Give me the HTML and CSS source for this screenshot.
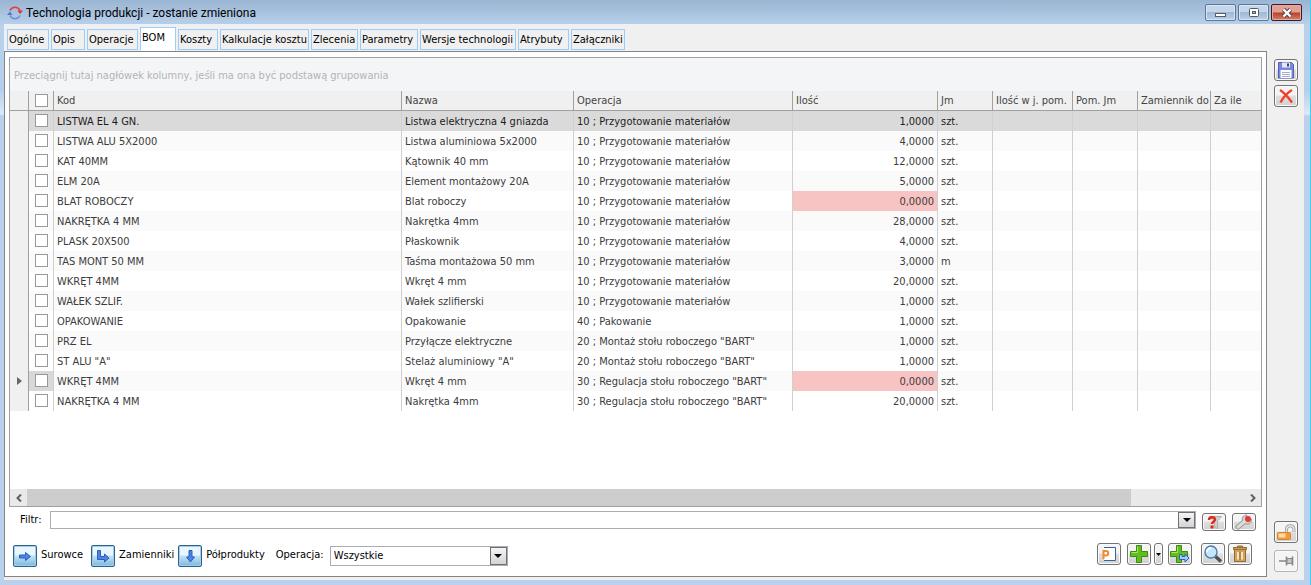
FILE: index.html
```html
<!DOCTYPE html>
<html lang="pl">
<head>
<meta charset="utf-8">
<title>Technologia produkcji - zostanie zmieniona</title>
<link rel="stylesheet" href="styles.css">
</head>
<body>
<div class="window">
  <header class="titlebar">
    <svg class="app-icon" viewBox="0 0 16 16" width="16" height="16"><path d="M3 5.500A5.500 5.500 0 0 1 13 5.500" fill="none" stroke="#e0403c" stroke-width="1.600"/><path d="M10.500 5.500h5.500L13 9z" fill="#d8302c"/><path d="M13 10.500A5.500 5.500 0 0 1 3 10.500" fill="none" stroke="#6b92e0" stroke-width="1.600"/><path d="M0 10h5.500L3 6.500z" fill="#4a78d4"/></svg>
    <h1>Technologia produkcji - zostanie zmieniona</h1>
    <div class="win-buttons">
      <button class="win" aria-label="Minimalizuj"><svg viewBox="0 0 12 10" width="12" height="10"><rect x=".5" y="5.500" width="10" height="3" fill="#fff" stroke="#555a66"/></svg></button>
      <button class="win" aria-label="Maksymalizuj"><svg viewBox="0 0 12 10" width="12" height="10"><rect x="1.500" y=".5" width="9" height="8" rx="1" fill="#fff" stroke="#555a66"/><rect x="4.500" y="3.500" width="3" height="2" fill="#9db5d0" stroke="#555a66"/></svg></button>
      <button class="win close" aria-label="Zamknij"><svg viewBox="0 0 12 10" width="12" height="10"><path d="M2.500 1.500l7 7m0-7l-7 7" stroke="#5a4448" stroke-width="4.400"/><path d="M2.500 1.500l7 7m0-7l-7 7" stroke="#fff" stroke-width="2.400"/></svg></button>
    </div>
  </header>
  <div class="client">
    <main class="main">
      <nav class="tabs">
        <button>Ogólne</button><button>Opis</button><button>Operacje</button><button class="active">BOM</button><button>Koszty</button><button>Kalkulacje kosztu</button><button>Zlecenia</button><button>Parametry</button><button>Wersje technologii</button><button>Atrybuty</button><button>Załączniki</button>
      </nav>
      <section class="panel">
        <div class="grid">
          <div class="group-hint">Przeciągnij tutaj nagłówek kolumny, jeśli ma ona być podstawą grupowania</div>
          <table>
            <colgroup><col class="c-mark"><col class="c-check"><col class="c-code"><col class="c-name"><col class="c-op"><col class="c-qty"><col class="c-unit"><col class="c-aux"><col class="c-auxunit"><col class="c-sub"><col></colgroup>
            <thead><tr><th></th><th><input type="checkbox" aria-label="Zaznacz wszystkie"></th><th>Kod</th><th>Nazwa</th><th>Operacja</th><th>Ilość</th><th>Jm</th><th>Ilość w j. pom.</th><th>Pom. Jm</th><th>Zamiennik do</th><th>Za ile</th></tr></thead>
            <tbody>
              <tr class="selected"><td></td><td><input type="checkbox" aria-label="LISTWA EL 4 GN."></td><td>LISTWA EL 4 GN.</td><td>Listwa elektryczna 4 gniazda</td><td>10 ; Przygotowanie materiałów</td><td>1,0000</td><td>szt.</td><td></td><td></td><td></td><td></td></tr>
              <tr><td></td><td><input type="checkbox" aria-label="LISTWA ALU 5X2000"></td><td>LISTWA ALU 5X2000</td><td>Listwa aluminiowa 5x2000</td><td>10 ; Przygotowanie materiałów</td><td>4,0000</td><td>szt.</td><td></td><td></td><td></td><td></td></tr>
              <tr><td></td><td><input type="checkbox" aria-label="KAT 40MM"></td><td>KAT 40MM</td><td>Kątownik 40 mm</td><td>10 ; Przygotowanie materiałów</td><td>12,0000</td><td>szt.</td><td></td><td></td><td></td><td></td></tr>
              <tr><td></td><td><input type="checkbox" aria-label="ELM 20A"></td><td>ELM 20A</td><td>Element montażowy 20A</td><td>10 ; Przygotowanie materiałów</td><td>5,0000</td><td>szt.</td><td></td><td></td><td></td><td></td></tr>
              <tr><td></td><td><input type="checkbox" aria-label="BLAT ROBOCZY"></td><td>BLAT ROBOCZY</td><td>Blat roboczy</td><td>10 ; Przygotowanie materiałów</td><td class="missing">0,0000</td><td>szt.</td><td></td><td></td><td></td><td></td></tr>
              <tr><td></td><td><input type="checkbox" aria-label="NAKRĘTKA 4 MM"></td><td>NAKRĘTKA 4 MM</td><td>Nakrętka 4mm</td><td>10 ; Przygotowanie materiałów</td><td>28,0000</td><td>szt.</td><td></td><td></td><td></td><td></td></tr>
              <tr><td></td><td><input type="checkbox" aria-label="PLASK 20X500"></td><td>PLASK 20X500</td><td>Płaskownik</td><td>10 ; Przygotowanie materiałów</td><td>4,0000</td><td>szt.</td><td></td><td></td><td></td><td></td></tr>
              <tr><td></td><td><input type="checkbox" aria-label="TAS MONT 50 MM"></td><td>TAS MONT 50 MM</td><td>Taśma montażowa 50 mm</td><td>10 ; Przygotowanie materiałów</td><td>3,0000</td><td>m</td><td></td><td></td><td></td><td></td></tr>
              <tr><td></td><td><input type="checkbox" aria-label="WKRĘT 4MM"></td><td>WKRĘT 4MM</td><td>Wkręt 4 mm</td><td>10 ; Przygotowanie materiałów</td><td>20,0000</td><td>szt.</td><td></td><td></td><td></td><td></td></tr>
              <tr><td></td><td><input type="checkbox" aria-label="WAŁEK SZLIF."></td><td>WAŁEK SZLIF.</td><td>Wałek szlifierski</td><td>10 ; Przygotowanie materiałów</td><td>1,0000</td><td>szt.</td><td></td><td></td><td></td><td></td></tr>
              <tr><td></td><td><input type="checkbox" aria-label="OPAKOWANIE"></td><td>OPAKOWANIE</td><td>Opakowanie</td><td>40 ; Pakowanie</td><td>1,0000</td><td>szt.</td><td></td><td></td><td></td><td></td></tr>
              <tr><td></td><td><input type="checkbox" aria-label="PRZ EL"></td><td>PRZ EL</td><td>Przyłącze elektryczne</td><td>20 ; Montaż stołu roboczego "BART"</td><td>1,0000</td><td>szt.</td><td></td><td></td><td></td><td></td></tr>
              <tr><td></td><td><input type="checkbox" aria-label="ST ALU A"></td><td>ST ALU "A"</td><td>Stelaż aluminiowy "A"</td><td>20 ; Montaż stołu roboczego "BART"</td><td>1,0000</td><td>szt.</td><td></td><td></td><td></td><td></td></tr>
              <tr class="focused"><td><svg viewBox="0 0 5 8" width="5" height="8"><path d="M0 0l5 4-5 4z" fill="#666"/></svg></td><td><input type="checkbox" aria-label="WKRĘT 4MM, regulacja"></td><td>WKRĘT 4MM</td><td>Wkręt 4 mm</td><td>30 ; Regulacja stołu roboczego "BART"</td><td class="missing">0,0000</td><td>szt.</td><td></td><td></td><td></td><td></td></tr>
              <tr><td></td><td><input type="checkbox" aria-label="NAKRĘTKA 4 MM, regulacja"></td><td>NAKRĘTKA 4 MM</td><td>Nakrętka 4mm</td><td>30 ; Regulacja stołu roboczego "BART"</td><td>20,0000</td><td>szt.</td><td></td><td></td><td></td><td></td></tr>
            </tbody>
          </table>
          <div class="scroll">
            <button aria-label="W lewo"><svg viewBox="0 0 8 8" width="8" height="8"><path d="M6 .5L2.500 4 6 7.500" fill="none" stroke="#606060" stroke-width="2"/></svg></button>
            <div class="track"><div class="thumb"></div></div>
            <button aria-label="W prawo"><svg viewBox="0 0 8 8" width="8" height="8"><path d="M2 .5L5.500 4 2 7.500" fill="none" stroke="#606060" stroke-width="2"/></svg></button>
          </div>
        </div>
        <div class="filter">
          <label for="filter">Filtr:</label>
          <div class="combo wide">
            <select id="filter"><option></option></select>
            <span class="arrow"></span>
          </div>
          <button class="tool low" aria-label="Wyczyść filtr"><svg viewBox="0 0 20 16" width="20" height="16"><path d="M6 2.500h11.500l-4 4.500v7.500l-3-1V7.500z" fill="#cfcfcf" stroke="#b0b0b0"/><path d="M5 6c0-3.500 6-3.500 6-.5 0 2-3 2-3 4.500" fill="none" stroke="#e02818" stroke-width="2.400"/><rect x="6.500" y="11.500" width="3" height="3" fill="#e02818"/></svg></button>
          <button class="tool low" aria-label="Ustawienia filtra"><svg viewBox="0 0 20 16" width="20" height="16"><path d="M4 13l6-5" stroke="#9a9a9a" stroke-width="5" stroke-linecap="round"/><path d="M13 1C9 1 7.500 4 8.500 7l3 3c4 .5 6.500-1 6-5l-3 2-3-2z" fill="#d0d0d0" stroke="#9a9a9a"/><path d="M4 13l6.500-5.500" stroke="#dcdcdc" stroke-width="3" stroke-linecap="round"/><circle cx="14" cy="5" r="3" fill="#e43a30"/></svg></button>
        </div>
        <div class="actions">
          <button class="blue" id="materials"><svg viewBox="0 0 16 16" width="16" height="16"><path d="M2.500 7h6V4.500L13.500 8.500l-5 4V10H2.500z" fill="#4f83e6" stroke="#2b5cc0"/></svg></button><label class="spaced" for="materials">Surowce</label>
          <button class="blue" id="substitutes"><svg viewBox="0 0 16 16" width="16" height="16"><path d="M2.500 2.500h3v6h4V6l4.500 4-4.500 4v-2.500h-7z" fill="#4f83e6" stroke="#2b5cc0"/></svg></button><label for="substitutes">Zamienniki</label>
          <button class="blue" id="semi"><svg viewBox="0 0 16 16" width="16" height="16"><path d="M7 2.500h3V9h2.500l-4 5-4-5H7z" fill="#4f83e6" stroke="#2b5cc0"/></svg></button><label for="semi">Półprodukty</label>
          <label class="op-label" for="op">Operacja:</label>
          <div class="combo op">
            <select id="op"><option>Wszystkie</option></select>
            <span class="arrow"></span>
          </div>
          <div class="tools">
            <button class="tool" aria-label="Parametry"><svg viewBox="0 0 20 18" width="20" height="18"><path d="M5 2.500h11.500v13H5" fill="#fff" stroke="#31659c"/><path d="M4.500 14V6H7a2.200 2.200 0 0 1 0 4.500H4.500" fill="none" stroke="#f08a32" stroke-width="2"/></svg></button>
            <button class="tool gap-s" aria-label="Dodaj"><svg viewBox="0 0 20 18" width="20" height="18"><path d="M7.500.5h5v6h6v5h-6v6h-5v-6h-6v-5h6z" fill="#62bd1e" stroke="#3c8a14"/><path d="M8.500 1.500v6h-6" fill="none" stroke="#a9e46c"/></svg></button>
            <button class="tool narrow" aria-label="Więcej"><svg viewBox="0 0 5 3" width="5" height="3"><path d="M0 0h5L2.500 3z" fill="#000"/></svg></button>
            <button class="tool gap-m" aria-label="Dodaj zamiennik"><svg viewBox="0 0 20 18" width="20" height="18"><path d="M6.500.5h5v6h6v5h-6v6h-5v-6h-6v-5h6z" fill="#62bd1e" stroke="#3c8a14"/><path d="M7.500 1.500v6h-6" fill="none" stroke="#a9e46c"/><path d="M9.500 9.500H12v2h3V9l4 4-4 4v-2.500H9.500z" fill="#a9ccf4" stroke="#2860c0"/></svg></button>
            <button class="tool gap-l" aria-label="Szukaj"><svg viewBox="0 0 20 18" width="20" height="18"><path d="M12.500 11.500l5.500 5" stroke="#4a5058" stroke-width="3.400"/><circle cx="8" cy="7" r="6" fill="#c4e6fa" stroke="#4d7cae" stroke-width="1.400"/><path d="M4 7a4 4 0 0 1 4-4" fill="none" stroke="#fff" stroke-width="1.800"/></svg></button>
            <button class="tool" aria-label="Usuń"><svg viewBox="0 0 20 18" width="20" height="18"><path d="M7.500 1h5v1.500h-5zM3.500 2.500h13v2h-13zM4.500 4.500h11v12h-11z" fill="#d0a460" stroke="#94692c"/><path d="M8 7v7.500m4-7.500v7.500" stroke="#f8e4b8" stroke-width="2"/><path d="M10 6.500v8.500" stroke="#94692c"/></svg></button>
          </div>
        </div>
      </section>
    </main>
    <aside class="side">
      <button class="tool" aria-label="Zapisz"><svg viewBox="0 0 20 18" width="20" height="18"><path d="M2.500 1.500h13l2 2v13.500h-15z" fill="#7c86dc" stroke="#555fb4"/><path d="M6 1.500h8v5H6z" fill="#e4e8fa"/><path d="M11 2.500h2v3h-2z" fill="#39427c"/><path d="M4.500 9h11v8h-11z" fill="#fff"/><path d="M6 11.500h8m-8 2h8m-8 2h8" stroke="#a4aad0"/></svg></button>
      <button class="tool" aria-label="Anuluj"><svg viewBox="0 0 20 18" width="20" height="18"><path d="M4 3Q10 7 16 15.500M16 3Q9 7 4.500 15.500" fill="none" stroke="#f0402a" stroke-width="2.400"/></svg></button>
      <button class="tool lock" aria-label="Odblokuj"><svg viewBox="0 0 20 18" width="20" height="18"><path d="M10.500 9V6a3.800 3.800 0 0 1 7.500 0v3" fill="none" stroke="#9c9c9c" stroke-width="3"/><path d="M10.500 9V6a3.800 3.800 0 0 1 7.500 0v3" fill="none" stroke="#e4e4e4" stroke-width="1.400"/><rect x="1.500" y="9.500" width="13" height="7" rx="1" fill="#f49a38" stroke="#d8862c"/><path d="M2.500 10.500h7v4h-7z" fill="#fcdcac"/></svg></button>
      <button class="tool pin" aria-label="Przypnij"><svg viewBox="0 0 20 18" width="20" height="18"><path d="M3 9h7" stroke="#888" stroke-width="1.500"/><path d="M10.500 4.500v9M16.500 4.500v9" stroke="#888" stroke-width="1.600"/><path d="M11 6.500h5v5h-5z" fill="#c4c4c4" stroke="#888"/></svg></button>
    </aside>
  </div>
</div>
</body>
</html>
```
FILE: styles.css
```css
* { box-sizing: border-box; }
body {
  margin: 0;
  font: 11px/14px Tahoma, "DejaVu Sans Condensed", sans-serif;
  color: #000;
}
button, select, input { font: inherit; color: inherit; margin: 0; }
button { padding: 0; }
svg { display: block; flex: none; }

.window {
  display: flex;
  flex-direction: column;
  min-height: 100vh;
  padding: 0 6px 5px 4px;
  border-right: 1px solid #35d3f2;
  background: linear-gradient(#9ab5d2 0, #b9d1ec 26px, #b4cfec 90px, #dce9f7 114px, #b9d1ec 116px);
}
.titlebar {
  display: flex;
  align-items: center;
  height: 24px;
  padding: 1px 2px 0 3px;
}
.titlebar h1 {
  flex: 1;
  margin: 0 0 0 3px;
  font: 12px/16px "Segoe UI", Roboto, sans-serif;
}
.win-buttons { display: flex; gap: 2px; }
.win {
  display: flex;
  align-items: center;
  justify-content: center;
  width: 31px;
  height: 17px;
  border: 1px solid #5d7796;
  border-radius: 2px;
  background: linear-gradient(#c3d6ea 50%, #9fb9d6 50%, #b9d0e8);
  box-shadow: inset 0 0 0 1px #d8e6f4;
}
.win.close {
  border-color: #4a1420;
  background: linear-gradient(#e0a095 48%, #b8402c 52%, #d08468);
  box-shadow: inset 0 0 0 1px #e4aca0;
}

.client { display: flex; flex: 1; background: #f0f0f0; }
.main {
  display: flex;
  flex: 1;
  flex-direction: column;
  min-width: 0;
  padding-bottom: 3px;
}
.tabs {
  display: grid;
  grid-template-columns: 42px 34px 51px 36px 40px 89px 47px 58px 96px 51px 54px;
  gap: 2px;
  align-items: start;
  height: 27px;
  padding: 3px 3px 0;
}
.tabs button {
  height: 21px;
  margin-top: 2px;
  padding: 1px 1px 0;
  border: 1px solid #99ccff;
  background: #f0f0f0;
  text-align: left;
  white-space: nowrap;
}
.tabs .active {
  height: 24px;
  margin-top: 0;
  padding-bottom: 4px;
  border-bottom-color: #fff;
  background: #fff;
}
.panel {
  display: flex;
  flex: 1;
  flex-direction: column;
  padding: 5px 4px 0;
  border: 1px solid #83838c;
  background: #fff;
}
.grid {
  display: flex;
  flex: 1;
  flex-direction: column;
  border: 1px solid #a0a0a0;
}
.group-hint {
  padding: 11px 4px 8px;
  background: #f3f5f7;
  color: #b4b4b4;
}
table {
  width: 100%;
  table-layout: fixed;
  border-spacing: 0;
  color: #3c3c3c;
}
.c-mark { width: 19px; }
.c-check { width: 25px; }
.c-code { width: 348px; }
.c-name { width: 172px; }
.c-op { width: 219px; }
.c-qty { width: 145px; }
.c-unit { width: 55px; }
.c-aux { width: 80px; }
.c-auxunit { width: 65px; }
.c-sub { width: 73px; }
th, td {
  height: 20px;
  padding: 0 3px;
  border-right: 1px solid #d0d0d0;
  text-align: left;
  white-space: nowrap;
}
td { padding-top: 2px; }
th {
  border-right-color: #a0a0a0;
  border-bottom: 1px solid #a0a0a0;
  background: #f0f0f0;
  color: #444;
  font-weight: 400;
}
th:last-child, td:last-child { border-right: 0; }
th:nth-child(2) { padding: 0 0 0 6px; }
td:nth-child(2) { padding: 0 0 1px 6px; }
td:first-child {
  padding: 0 0 0 7px;
  border-right-color: #a0a0a0;
  background: #f0f0f0;
}
td:nth-child(6) { text-align: right; }
tbody tr:nth-child(even) { background: #fafafa; }
.selected { background: #dadada; color: #1c1c1c; }
.focused td:nth-child(2) { background: #d8d8d8; }
td.missing { background: #f8c3c3; }
input[type="checkbox"] {
  display: block;
  width: 13px;
  height: 13px;
  appearance: none;
  border: 1px solid #999;
  background: #fff;
}

.scroll { display: flex; height: 17px; margin-top: auto; background: #e9e9e9; }
.scroll button {
  display: flex;
  align-items: center;
  justify-content: center;
  width: 17px;
  border: 0;
  background: #e9e9e9;
}
.track { flex: 1; }
.thumb { width: 90.7%; height: 100%; background: #cdcdcd; }

.filter { display: flex; gap: 6px; padding: 4px 6px 0 11px; }
.filter label { width: 24px; padding-top: 2px; }
.combo { position: relative; }
.combo select {
  display: block;
  width: 100%;
  height: 20px;
  padding: 0 20px 0 3px;
  appearance: none;
  border: 1px solid #ababb3;
  border-radius: 0;
  background: #fff;
}
.combo.wide { flex: 1; }
.combo.wide select { height: 18px; }
.arrow {
  position: absolute;
  top: 1px;
  right: 1px;
  display: flex;
  align-items: center;
  justify-content: center;
  width: 17px;
  height: 18px;
  border: 1px solid #707078;
  background: linear-gradient(#f4f4f4, #d4d4d4);
  pointer-events: none;
}
.wide .arrow { height: 16px; }
.arrow::after {
  content: "";
  border: solid transparent;
  border-width: 4px 4px 0;
  border-top-color: #000;
}

.tool {
  display: flex;
  align-items: center;
  justify-content: center;
  width: 24px;
  height: 22px;
  border: 1px solid #737373;
  border-radius: 3px;
  background: linear-gradient(#f4f4f4 45%, #dedede 50%, #d2d2d2);
  box-shadow: inset 0 0 0 1px #fafafa;
}
.tool.low { height: 18px; margin-top: 2px; }
.tool.narrow { width: 9px; }
.actions {
  display: flex;
  gap: 4px;
  padding: 12px 10px 9px 4px;
}
.actions label { padding-top: 5px; }
.actions .spaced { margin-right: 4px; }
.actions .op-label { margin: 0 2px 0 7px; }
.combo.op { width: 178px; margin-top: 3px; }
.blue {
  display: flex;
  align-items: center;
  justify-content: center;
  width: 24px;
  height: 22px;
  margin-top: 2px;
  border: 1px solid #2c628b;
  border-radius: 2px;
  background: linear-gradient(#eaf6fd 45%, #c2e3f7 50%, #7cb8dc);
  box-shadow: inset 0 0 0 1px #a4cce6;
}
.tools { display: flex; gap: 3px; margin-left: auto; }
.gap-s { margin-left: 3px; }
.gap-m { margin-left: 2px; }
.gap-l { margin-left: 6px; }

.side {
  display: flex;
  flex-direction: column;
  gap: 4px;
  padding: 35px 6px 8px 7px;
}
.lock { margin-top: auto; }
.pin { margin-top: 3px; border-color: #b4b4b4; background: #f4f4f4; }
```
